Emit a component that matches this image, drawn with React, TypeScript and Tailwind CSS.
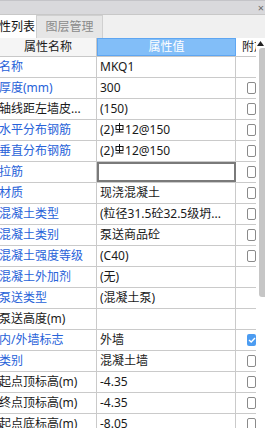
type Cb = 'none' | 'empty' | 'checked';

type Row = {
  name: string;
  value: string;
  blue: boolean;
  cb: Cb;
  steel?: boolean;
  editing?: boolean;
};

const rows: Row[] = [
  { name: '名称', value: 'MKQ1', blue: true, cb: 'none' },
  { name: '厚度(mm)', value: '300', blue: true, cb: 'empty' },
  { name: '轴线距左墙皮...', value: '(150)', blue: false, cb: 'empty' },
  { name: '水平分布钢筋', value: '12@150', blue: true, cb: 'empty', steel: true },
  { name: '垂直分布钢筋', value: '12@150', blue: true, cb: 'empty', steel: true },
  { name: '拉筋', value: '', blue: true, cb: 'empty', editing: true },
  { name: '材质', value: '现浇混凝土', blue: true, cb: 'empty' },
  { name: '混凝土类型', value: '(粒径31.5砼32.5级坍...', blue: true, cb: 'empty' },
  { name: '混凝土类别', value: '泵送商品砼', blue: true, cb: 'empty' },
  { name: '混凝土强度等级', value: '(C40)', blue: true, cb: 'empty' },
  { name: '混凝土外加剂', value: '(无)', blue: true, cb: 'none' },
  { name: '泵送类型', value: '(混凝土泵)', blue: true, cb: 'none' },
  { name: '泵送高度(m)', value: '', blue: false, cb: 'none' },
  { name: '内/外墙标志', value: '外墙', blue: true, cb: 'checked' },
  { name: '类别', value: '混凝土墙', blue: true, cb: 'empty' },
  { name: '起点顶标高(m)', value: '-4.35', blue: false, cb: 'empty' },
  { name: '终点顶标高(m)', value: '-4.35', blue: false, cb: 'empty' },
  { name: '起点底标高(m)', value: '-8.05', blue: false, cb: 'empty' },
];

function SteelMark() {
  return (
    <svg width="9" height="10" viewBox="0 0 9 10" className="mx-[1px] mb-[4px] inline-block">
      <rect x="1" y="2.5" width="7" height="4" fill="none" stroke="#111" strokeWidth="1" />
      <line x1="4.5" y1="0" x2="4.5" y2="9" stroke="#111" strokeWidth="1" />
      <line x1="0.5" y1="9" x2="8.5" y2="9" stroke="#111" strokeWidth="1" />
    </svg>
  );
}

function Check({ state }: { state: Cb }) {
  if (state === 'none') return null;
  if (state === 'checked') {
    return (
      <div className="flex h-[12px] w-[12px] items-center justify-center rounded-[2px] bg-[#4c9cf1]">
        <svg width="8" height="8" viewBox="0 0 8 8">
          <path d="M1 4 L3.2 6 L7 2" fill="none" stroke="white" strokeWidth="1.4" />
        </svg>
      </div>
    );
  }
  return <div className="h-[12px] w-[12px] rounded-[2px] border border-[#8a8a8a] bg-white" />;
}

export default function App() {
  return (
    <div className="h-[428px] w-[265px] overflow-hidden bg-white font-['Noto_Sans','Noto_Sans_CJK_SC',sans-serif] text-[12px] text-[#1a1a1a]">
      {/* window title strip */}
      <div className="flex h-[14px] items-center justify-end border-t border-[#c4c4c8] bg-[#d9d9dc] pr-[1px]">
        <span className="text-[11px] leading-none text-[#6a6a6a]">×</span>
      </div>

      {/* tabs */}
      <div className="flex h-[24px] items-end border-t border-[#c8c8c8] bg-[#f0f0f0]">
        <div className="-ml-[14px] flex h-[23px] w-[50px] items-center justify-center bg-white text-[12px] text-[#111]">
          属性列表
        </div>
        <div className="flex h-[23px] w-[67px] items-center justify-center border-x border-t border-[#d0d0d0] bg-[#e6e6e6] text-[12px] text-[#8a8a8a]">
          图层管理
        </div>
      </div>

      <div className="flex">
        {/* table */}
        <div className="w-[256px] overflow-hidden">
          <div className="flex h-[19px] border-b border-[#c8c8c8]">
            <div className="flex w-[97px] shrink-0 items-center justify-center border-r border-[#c8c8c8] bg-[#f5f5f5]">
              属性名称
            </div>
            <div className="flex w-[139px] shrink-0 items-center justify-center border border-[#5ea6f2] bg-[#82bef8] text-white">
              属性值
            </div>
            <div className="flex w-[30px] shrink-0 items-center pl-[6px] text-[#222]">附加</div>
          </div>

          {rows.map((r) => (
            <div key={r.name} className="flex h-[21px] border-b border-[#cacaca]">
              <div
                className={
                  'flex w-[97px] shrink-0 items-center overflow-hidden whitespace-nowrap border-r border-[#cacaca] pl-0 ' +
                  (r.blue ? 'text-[#2762d9]' : 'text-[#1a1a1a]')
                }
              >
                <span className="-ml-[1px]">{r.name}</span>
              </div>
              {r.editing ? (
                <div className="w-[139px] shrink-0 border-2 border-[#7a7a7a] bg-white" />
              ) : (
                <div className="flex w-[139px] shrink-0 items-center overflow-hidden whitespace-nowrap border-r border-[#cacaca] pl-[3px]">
                  {r.steel ? (
                    <>
                      <span>(2)</span>
                      <SteelMark />
                      <span>{r.value}</span>
                    </>
                  ) : (
                    r.value
                  )}
                </div>
              )}
              <div className="flex w-[20px] shrink-0 items-center pl-[11px]">
                <Check state={r.cb} />
              </div>
            </div>
          ))}
        </div>

        {/* scrollbar */}
        <div className="flex w-[9px] flex-col items-end bg-white">
          <svg width="7" height="5" viewBox="0 0 7 5" className="mr-[1px] mt-[3px]">
            <path d="M0 5 L3.5 0 L7 5 Z" fill="#222" />
          </svg>
          <div className="mt-[2px] h-[249px] w-[6px] rounded-l-[3px] bg-[#c6c6c6]" />
        </div>
      </div>
    </div>
  );
}
